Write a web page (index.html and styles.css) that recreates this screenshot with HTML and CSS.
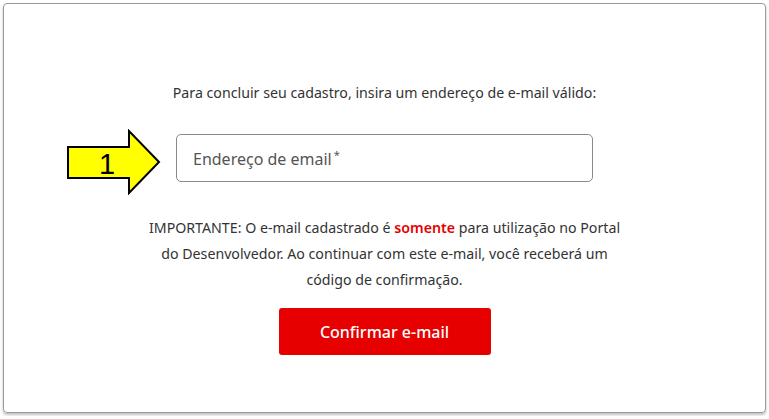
FILE: index.html
```html
<!DOCTYPE html>
<html lang="pt-BR">
<head>
<meta charset="utf-8">
<link rel="stylesheet" href="styles.css">
</head>
<body>
<div class="card">
  <p class="intro">Para concluir seu cadastro, insira um endereço de e-mail válido:</p>
  <div class="field-row">
    <div class="field">
      <span class="placeholder">Endereço de email<sup>*</sup></span>
    </div>
    <svg class="arrow" width="96" height="66" viewBox="0 0 96 66">
      <polygon points="2,18 63,18 63,2 93,33 63,64 63,49 2,49" fill="#ffff00" stroke="#000" stroke-width="2" stroke-linejoin="miter"/>
      <text x="41" y="45" text-anchor="middle" class="num">1</text>
    </svg>
  </div>
  <p class="note">IMPORTANTE: O e-mail cadastrado é <span class="red">somente</span> para utilização no Portal do Desenvolvedor. Ao continuar com este e-mail, você receberá um código de confirmação.</p>
  <button class="btn">Confirmar e-mail</button>
</div>
</body>
</html>
```
FILE: styles.css
```css
html, body { margin: 0; padding: 0; background: #fff; }
body { padding: 3px; font-family: "Noto Sans", sans-serif; color: #333; }
.card {
  width: 763px;
  height: 410px;
  border: 1px solid #9a9a9a;
  border-radius: 4px;
  box-shadow: 0 2px 3px rgba(0,0,0,0.25);
  display: flex;
  flex-direction: column;
  align-items: center;
  box-sizing: border-box;
}
.intro {
  margin: 79px 0 0;
  font-size: 14.2px;
  line-height: 20px;
}
.field-row { position: relative; margin-top: 31px; }
.field {
  width: 417px;
  height: 48px;
  box-sizing: border-box;
  border: 1px solid #8a8a8a;
  border-radius: 5px;
  display: flex;
  align-items: center;
  padding-left: 16px;
}
.placeholder { font-size: 16px; color: #555; }
.placeholder sup { font-size: 11px; vertical-align: 6px; margin-left: 2px; }
.arrow { position: absolute; left: -110px; top: -5px; }
.num { font-family: "Liberation Sans", sans-serif; font-size: 29px; fill: #000; }
.note {
  margin: 33px 0 0;
  width: 480px;
  text-align: center;
  font-size: 14.2px;
  line-height: 26px;
}
.red { color: #e60000; font-weight: 600; }
.btn {
  margin-top: 15px;
  width: 212px;
  height: 47px;
  background: #e60000;
  color: #fff;
  border: none;
  border-radius: 3px;
  font-family: "Noto Sans", sans-serif;
  font-size: 16px;
  font-weight: 500;
}
```
